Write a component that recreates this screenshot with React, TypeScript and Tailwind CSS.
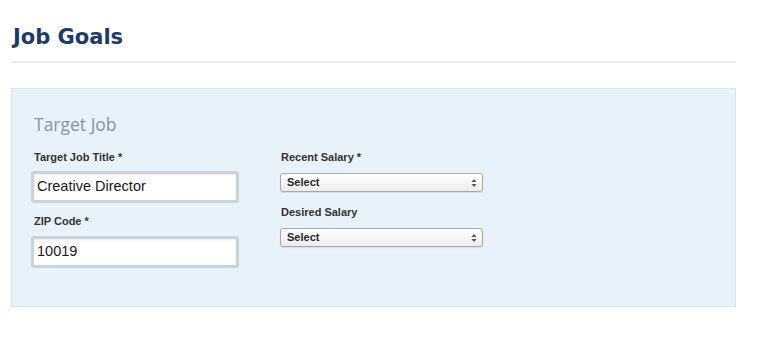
import React from "react";

function Arrows() {
  return (
    <svg width="6" height="10" viewBox="0 0 6 10" className="shrink-0">
      <path d="M3 1 L5.5 4 L0.5 4 Z" fill="#555" />
      <path d="M3 9 L5.5 6 L0.5 6 Z" fill="#555" />
    </svg>
  );
}

function SelectBox() {
  return (
    <div className="w-[203px] h-[19px] rounded-[3px] border border-[#a9a9a9] bg-gradient-to-b from-white to-[#ececec] shadow-[0_1px_1px_rgba(0,0,0,0.08)] flex items-center justify-between pl-[6px] pr-[5px]">
      <span className="text-[11px] font-bold text-[#2a2a2a] font-['Liberation_Sans',Arial,sans-serif]">Select</span>
      <Arrows />
    </div>
  );
}

function TextBox({ value }: { value: string }) {
  return (
    <div className="w-[208px] h-[32px] rounded-[3px] border-[3px] border-[#cbd3da] bg-white flex items-center pl-[3px] shadow-[inset_0_1px_2px_rgba(0,0,0,0.08)]">
      <span className="text-[14.5px] text-[#1a1a1a] font-['Liberation_Sans',Arial,sans-serif]">{value}</span>
    </div>
  );
}

const label = "text-[11px] font-bold text-[#333] font-['Liberation_Sans',Arial,sans-serif] leading-[12px]";

export default function App() {
  return (
    <div className="w-[764px] h-[341px] bg-white pl-[11px] pt-[25px] overflow-hidden">
      <h1 className="pl-[2px] text-[21px] leading-[25px] font-bold text-[#1d3a6a] font-['DejaVu_Sans',Verdana,sans-serif]">
        Job Goals
      </h1>
      <div className="mt-[11px] w-[725px] h-[2px] bg-[#ececec]" />
      <div className="mt-[25px] w-[725px] h-[219px] bg-[#e7f2fb] border border-[#d6e5f0] pl-[19px] pt-[24px]">
        <div className="pl-[3px] text-[17.5px] leading-[22px] text-[#8894a1] font-['Open_Sans',sans-serif]">Target Job</div>
        <div className="flex gap-[41px] mt-[16px]">
          <div className="flex flex-col">
            <div className={label + " pl-[3px]"}>Target Job Title *</div>
            <div className="mt-[8px]"><TextBox value="Creative Director" /></div>
            <div className={label + " pl-[3px] mt-[12px]"}>ZIP Code *</div>
            <div className="mt-[9px]"><TextBox value="10019" /></div>
          </div>
          <div className="flex flex-col">
            <div className={label + " pl-[1px]"}>Recent Salary *</div>
            <div className="mt-[10px]"><SelectBox /></div>
            <div className={label + " pl-[1px] mt-[14px]"}>Desired Salary</div>
            <div className="mt-[10px]"><SelectBox /></div>
          </div>
        </div>
      </div>
    </div>
  );
}
